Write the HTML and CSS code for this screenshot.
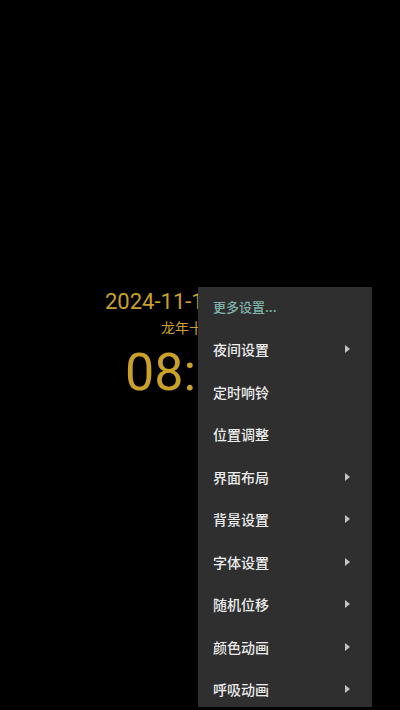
FILE: index.html
```html
<!DOCTYPE html>
<html>
<head>
<meta charset="utf-8">
<link rel="stylesheet" href="styles.css">
</head>
<body>
<div class="screen">
  <div class="clock">
    <div class="date">2024-11-15 星期五</div>
    <div class="lunar">龙年十月十五</div>
    <div class="time">08:30</div>
  </div>
  <div class="menu">
    <div class="item accent">更多设置...</div>
    <div class="item">夜间设置<span class="arrow"></span></div>
    <div class="item">定时响铃</div>
    <div class="item">位置调整</div>
    <div class="item">界面布局<span class="arrow"></span></div>
    <div class="item">背景设置<span class="arrow"></span></div>
    <div class="item">字体设置<span class="arrow"></span></div>
    <div class="item">随机位移<span class="arrow"></span></div>
    <div class="item">颜色动画<span class="arrow"></span></div>
    <div class="item">呼吸动画<span class="arrow"></span></div>
  </div>
</div>
</body>
</html>
```

FILE: styles.css
```css
html, body {
  margin: 0;
  padding: 0;
  background: #000;
}
.screen {
  position: relative;
  width: 400px;
  height: 710px;
  overflow: hidden;
  background: #000;
  font-family: Roboto, "Noto Sans CJK SC", sans-serif;
}
.clock {
  padding-top: 287px;
  display: flex;
  flex-direction: column;
  color: #c9a12a;
}
.date {
  padding-left: 105px;
  font-size: 22px;
  line-height: 30px;
  white-space: nowrap;
}
.lunar {
  padding-left: 161px;
  font-size: 14px;
  line-height: 20px;
  font-family: "Noto Sans CJK SC", sans-serif;
  white-space: nowrap;
}
.time {
  padding-left: 125px;
  font-size: 52px;
  line-height: 56px;
  margin-top: 8px;
  white-space: nowrap;
}
.menu {
  position: absolute;
  left: 198px;
  top: 287px;
  width: 174px;
  height: 420px;
  background: #2f2f2f;
  display: flex;
  flex-direction: column;
}
.item {
  height: 42.5px;
  flex: none;
  display: flex;
  align-items: center;
  justify-content: space-between;
  padding: 0 22px 3px 15px;
  color: #ececec;
  font-family: "Noto Sans CJK SC", sans-serif;
  font-size: 14px;
  font-weight: 500;
  box-sizing: border-box;
}
.item.accent {
  color: #7fb3aa;
  font-size: 13px;
}
.arrow {
  width: 0;
  height: 0;
  border-top: 4px solid transparent;
  border-bottom: 4px solid transparent;
  border-left: 5px solid #c4c4c4;
}
```
